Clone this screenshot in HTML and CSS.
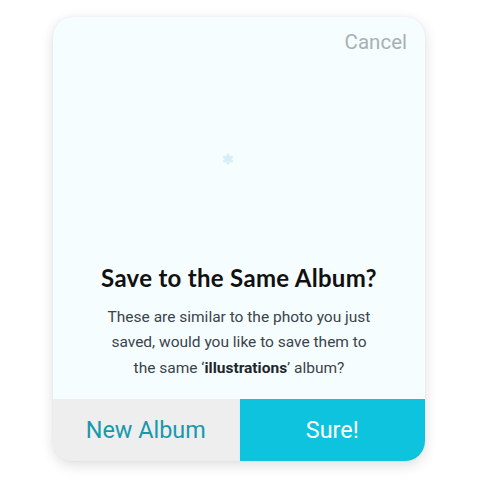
FILE: index.html
```html
<!DOCTYPE html>
<html>
<head>
<meta charset="utf-8">
<link rel="stylesheet" href="styles.css">
</head>
<body>
<div class="page">
  <div class="card">
    <div class="card-header">
      <span class="cancel">Cancel</span>
    </div>
    <div class="preview">
      <svg class="spinner" width="12" height="12" viewBox="0 0 12 12">
        <g fill="#d6eff7">
          <circle cx="6" cy="6" r="3.6"/>
          <circle cx="6" cy="2" r="1.6"/>
          <circle cx="6" cy="10" r="1.6"/>
          <circle cx="2.5" cy="4" r="1.6"/>
          <circle cx="9.5" cy="4" r="1.6"/>
          <circle cx="2.5" cy="8" r="1.6"/>
          <circle cx="9.5" cy="8" r="1.6"/>
        </g>
      </svg>
    </div>
    <div class="content">
      <h1 class="title">Save to the Same Album?</h1>
      <p class="message">These are similar to the photo you just saved, would you like to save them to the same ‘<strong>illustrations</strong>’ album?</p>
    </div>
    <div class="actions">
      <button class="btn btn-secondary">New Album</button>
      <button class="btn btn-primary">Sure!</button>
    </div>
  </div>
</div>
</body>
</html>
```

FILE: styles.css
```css
html, body {
  margin: 0;
  padding: 0;
  background: #ffffff;
}

.page {
  width: 480px;
  height: 480px;
  padding: 17px 0 0 53px;
  box-sizing: border-box;
}

.card {
  width: 372px;
  height: 444px;
  background: #f6fdfe;
  border-radius: 20px;
  box-shadow: 0 4px 14px rgba(0, 0, 0, 0.13), 0 0 3px rgba(0, 0, 0, 0.05);
  display: flex;
  flex-direction: column;
  overflow: hidden;
  font-family: Roboto, "Liberation Sans", sans-serif;
}

.card-header {
  display: flex;
  justify-content: flex-end;
  padding: 13px 18px 0 0;
}

.cancel {
  font-size: 20.5px;
  line-height: 24px;
  color: #a9b0b4;
}

.preview {
  flex: 1;
  display: flex;
  align-items: center;
  justify-content: center;
  padding-right: 22px;
}

.content {
  display: flex;
  flex-direction: column;
  align-items: center;
  padding: 0 24px 18px;
}

.title {
  margin: 0;
  font-family: Lato, "Noto Sans", sans-serif;
  font-weight: 700;
  font-size: 24px;
  letter-spacing: 0.3px;
  line-height: 28px;
  color: #111111;
  white-space: nowrap;
}

.message {
  margin: 13px 0 0;
  font-size: 15.5px;
  line-height: 25.5px;
  color: #3a434c;
  text-align: center;
  width: 280px;
}

.message strong {
  font-weight: 700;
  color: #1e262d;
}

.actions {
  display: flex;
  height: 62px;
}

.btn {
  flex: 1;
  border: none;
  margin: 0;
  padding: 0;
  font-family: Roboto, "Liberation Sans", sans-serif;
  font-size: 23.4px;
  cursor: pointer;
}

.btn-secondary {
  background: #eeeeee;
  color: #1798ad;
}

.btn-primary {
  background: #0dc3dd;
  color: #ffffff;
  border-left: 1px solid #d5f2f7;
}
```
